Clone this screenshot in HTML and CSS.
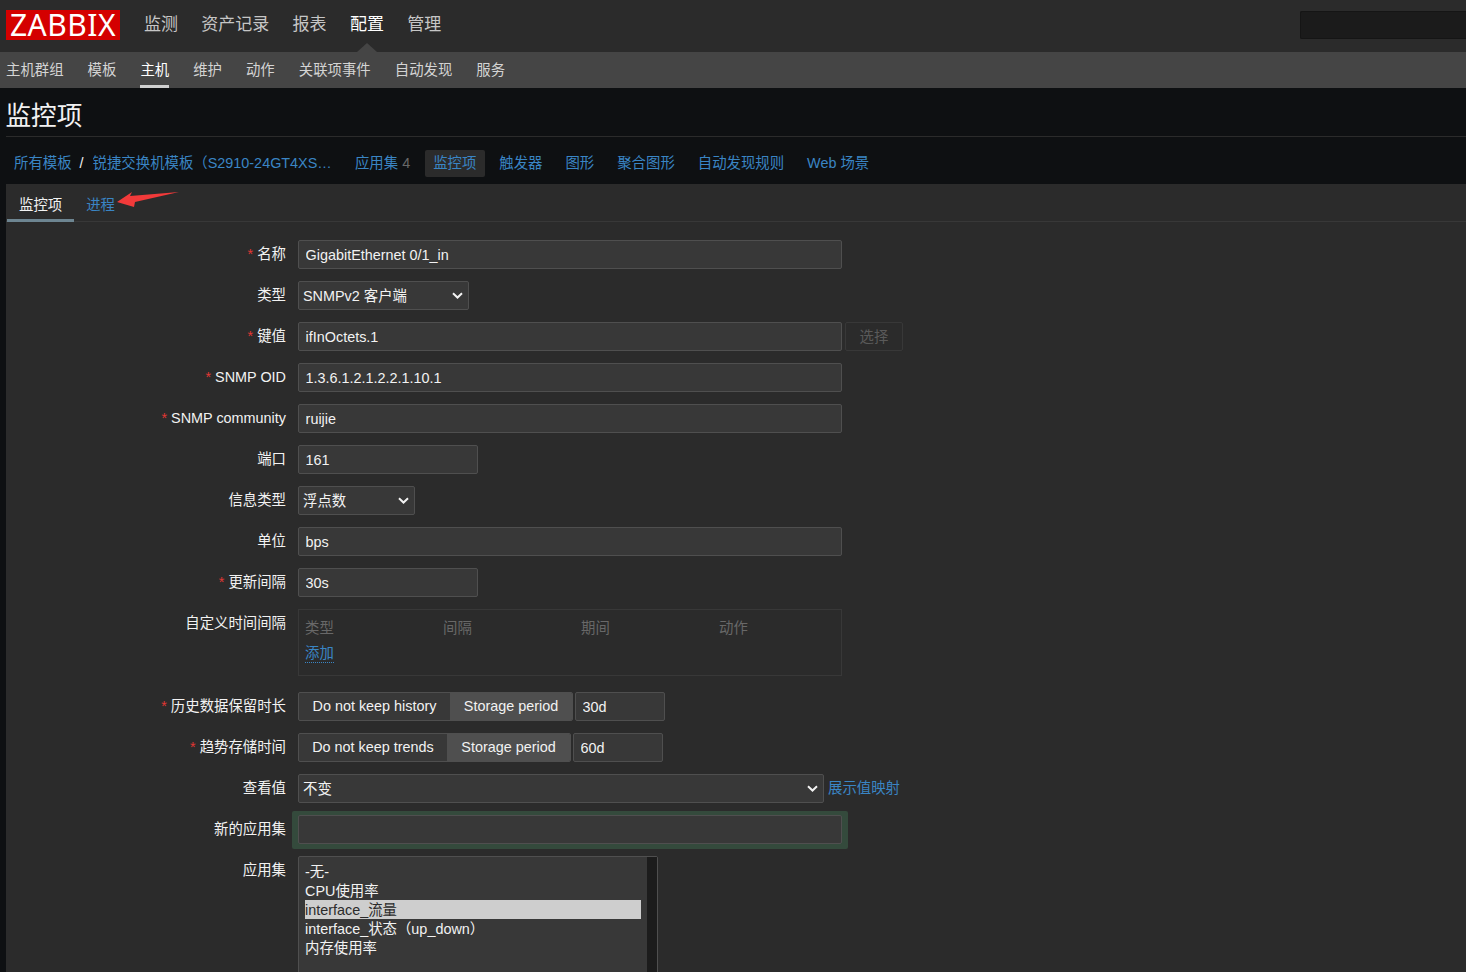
FILE: index.html
```html
<!DOCTYPE html>
<html lang="zh">
<head>
<meta charset="utf-8">
<title>监控项</title>
<link rel="stylesheet" href="styles.css">
</head>
<body>
<header class="topbar">
  <div class="logo">ZABBIX</div>
  <nav class="mainnav">
    <a>监测</a><a>资产记录</a><a>报表</a><a class="on">配置</a><a>管理</a>
  </nav>
  <div class="search"></div>
</header>
<nav class="subnav">
  <a>主机群组</a><a>模板</a><a class="on">主机</a><a>维护</a><a>动作</a><a>关联项事件</a><a>自动发现</a><a>服务</a>
</nav>
<h1 class="title">监控项</h1>
<nav class="crumbs">
  <a class="c-first">所有模板</a><span class="sep">/</span><a class="c-long">锐捷交换机模板（<span class="lat">S2910-24GT4XS-E</span>）</a>
  <div class="c-items">
    <a>应用集 <span class="count">4</span></a>
    <a class="on">监控项</a>
    <a>触发器</a>
    <a>图形</a>
    <a>聚合图形</a>
    <a>自动发现规则</a>
    <a>Web 场景</a>
  </div>
</nav>
<main class="panel">
  <div class="tabs">
    <a class="tab on">监控项</a><a class="tab">进程</a>
    <svg class="arrow" width="64" height="20" viewBox="0 0 64 20"><path d="M0 11 L15 1 L13 5 L62 1 L18 11 L17 16 Z" fill="#f23a3a"/></svg>
  </div>
  <form class="form">
    <div class="row"><label><i>*</i> 名称</label><div><input class="w-full" value="GigabitEthernet 0/1_in"></div></div>
    <div class="row"><label>类型</label><div><select class="w-171"><option>SNMPv2 客户端</option></select></div></div>
    <div class="row"><label><i>*</i> 键值</label><div class="inline"><input class="w-full" value="ifInOctets.1"><button type="button" class="btn" disabled>选择</button></div></div>
    <div class="row"><label><i>*</i> SNMP OID</label><div><input class="w-full" value="1.3.6.1.2.1.2.2.1.10.1"></div></div>
    <div class="row"><label><i>*</i> SNMP community</label><div><input class="w-full" value="ruijie"></div></div>
    <div class="row"><label>端口</label><div><input class="w-180" value="161"></div></div>
    <div class="row"><label>信息类型</label><div><select class="w-117"><option>浮点数</option></select></div></div>
    <div class="row"><label>单位</label><div><input class="w-full" value="bps"></div></div>
    <div class="row"><label><i>*</i> 更新间隔</label><div><input class="w-180" value="30s"></div></div>
    <div class="row row-table"><label>自定义时间间隔</label>
      <div class="intervals">
        <div class="int-head"><span>类型</span><span>间隔</span><span>期间</span><span>动作</span></div>
        <a class="add">添加</a>
      </div>
    </div>
    <div class="row"><label><i>*</i> 历史数据保留时长</label>
      <div class="inline gap2"><div class="toggle"><span class="seg s1">Do not keep history</span><span class="seg on s2">Storage period</span></div><input class="w-90" value="30d"></div>
    </div>
    <div class="row"><label><i>*</i> 趋势存储时间</label>
      <div class="inline gap2"><div class="toggle"><span class="seg s3">Do not keep trends</span><span class="seg on s4">Storage period</span></div><input class="w-90" value="60d"></div>
    </div>
    <div class="row"><label>查看值</label><div class="inline gap4"><select class="w-526"><option>不变</option></select><a class="maplink">展示值映射</a></div></div>
    <div class="row"><label>新的应用集</label><div class="hl"><input class="w-full"></div></div>
    <div class="row"><label>应用集</label>
      <div class="listbox">
        <ul>
          <li>-无-</li>
          <li>CPU使用率</li>
          <li class="sel">interface_流量</li>
          <li>interface_状态（up_down）</li>
          <li>内存使用率</li>
        </ul>
        <div class="scroll"></div>
      </div>
    </div>
  </form>
</main>
</body>
</html>
```
FILE: styles.css
```css
* { box-sizing: border-box; }
html, body { margin: 0; height: 972px; overflow: hidden; }
body {
  background: #0e1012;
  color: #f2f2f2;
  font-family: "Liberation Sans", "Noto Sans CJK SC", sans-serif;
  font-size: 14.4px;
  text-spacing-trim: space-all;
}
a { text-decoration: none; cursor: pointer; }

.topbar {
  height: 52px;
  background: #2b2b2b;
  display: flex;
  align-items: flex-start;
  padding-left: 6px;
}
.logo {
  width: 114px;
  height: 30px;
  margin-top: 10px;
  background: #d40000;
  color: #fff;
  font-family: "Noto Sans", sans-serif;
  font-size: 30px;
  line-height: 30px;
  text-align: center;
  letter-spacing: 0.5px;
}
.mainnav { display: flex; gap: 23.3px; margin-left: 24px; margin-top: 13.5px; font-size: 17px; line-height: 22px; }
.mainnav a { color: #c6c6c6; position: relative; }
.mainnav a.on { color: #fff; }
.mainnav a.on::after {
  content: "";
  position: absolute;
  left: 7px;
  top: 29px;
  border: 10px solid transparent;
  border-top: 0;
  border-bottom: 9px solid #454545;
}
.search {
  margin-left: auto;
  margin-top: 11px;
  width: 166px;
  height: 28px;
  background: #1b1b1b;
  border: 1px solid #151515;
  border-right: 0;
  border-radius: 2px 0 0 2px;
}

.subnav {
  height: 36px;
  background: #454545;
  display: flex;
  gap: 24px;
  padding-left: 6px;
}
.subnav a { color: #d4d4d4; line-height: 36px; height: 36px; }
.subnav a.on { color: #fff; border-bottom: 3px solid #d0d0d0; }

.title {
  height: 49px;
  margin: 0 0 0 5.5px;
  padding-top: 9px;
  font-size: 25.6px;
  line-height: 38px;
  font-weight: 400;
  color: #f2f2f2;
  border-bottom: 1px solid #2b2b2b;
}

.crumbs {
  height: 47px;
  display: flex;
  align-items: center;
  padding-left: 14px;
  padding-top: 6px;
  line-height: 27px;
  color: #3a85c4;
}
.crumbs a { color: #3a85c4; }
.sep { color: #f2f2f2; margin: 0 9px 0 8px; }
.c-long { display: block; height: 27px; width: 240px; overflow: hidden; white-space: nowrap; text-overflow: ellipsis; }
.c-items { display: flex; gap: 6.2px; margin-left: 14px; }
.c-items a { padding: 0 8.4px; height: 27px; line-height: 27px; border-radius: 2px; }
.c-items a.on { background: #2b2b2b; }
.count { color: #686868; }

.panel {
  margin-left: 6px;
  background: #2b2b2b;
  height: 788px;
}
.tabs {
  height: 38px;
  display: flex;
  border-bottom: 1px solid #383838;
  position: relative;
  padding-left: 1px;
}
.tab { padding: 0 12px; line-height: 42px; height: 38px; color: #3a85c4; }
.tab.on { color: #f2f2f2; border-bottom: 3px solid #6d8591; }
.arrow { position: absolute; left: 111px; top: 7px; }

.form { padding-top: 18px; }
.row {
  display: grid;
  grid-template-columns: 280px 1fr;
  column-gap: 12px;
  margin-bottom: 12px;
}
.row-table { margin-bottom: 16px; }
.row label {
  text-align: right;
  line-height: 18px;
  padding-top: 5px;
  color: #f2f2f2;
}
.row label i { font-style: normal; color: #e33734; }
.inline { display: flex; align-items: flex-start; }
.gap2 { gap: 2px; }
.gap4 { gap: 4px; }

input, select {
  display: block;
  height: 29px;
  background-color: #383838;
  border: 1px solid #4f4f4f;
  border-radius: 2px;
  color: #f2f2f2;
  font-family: inherit;
  font-size: 14.4px;
  padding: 0 6.6px;
  margin: 0;
  outline: 0;
}
select {
  appearance: none;
  padding: 0 0 0 4px;
  background-image: url("data:image/svg+xml,%3Csvg xmlns='http://www.w3.org/2000/svg' width='11' height='7' viewBox='0 0 11 7'%3E%3Cpath d='M1 1.2 L5.5 5.5 L10 1.2' fill='none' stroke='%23f2f2f2' stroke-width='2'/%3E%3C/svg%3E");
  background-repeat: no-repeat;
  background-position: right 5px center;
}
.w-full { width: 544px; }
.w-180 { width: 180px; }
.w-90 { width: 90px; }
.w-171 { width: 171px; }
.w-117 { width: 117px; }
.w-526 { width: 526px; }

.btn {
  width: 58px;
  height: 29px;
  margin-left: 3px;
  background: #2b2b2b;
  border: 1px solid #383838;
  border-radius: 2px;
  color: #5a5a5a;
  font-family: inherit;
  font-size: 14.4px;
  padding: 0 0 2px;
}

.intervals {
  width: 544px;
  height: 67px;
  border: 1px solid #383838;
  padding: 9px 6px 0;
}
.int-head { display: grid; grid-template-columns: 138px 138px 138px 1fr; color: #686868; line-height: 18px; }
.add {
  display: inline-block;
  margin-top: 7px;
  color: #3a85c4;
  line-height: 18px;
  border-bottom: 1px dotted #3a85c4;
}

.toggle {
  display: flex;
  height: 29px;
  border: 1px solid #4f4f4f;
  border-radius: 2px;
  background: #383838;
  overflow: hidden;
}
.seg { line-height: 26px; text-align: center; color: #f2f2f2; }
.seg.on { background: #4f4f4f; }
.s1 { width: 151px; }
.s2 { width: 122px; }
.s3 { width: 148px; }
.s4 { width: 123px; }

.maplink { color: #3a85c4; line-height: 29px; }

.hl {
  width: 556px;
  margin: -4px 0 -5px -6px;
  padding: 4px 6px 5px;
  background: #344a3c;
  border-radius: 2px;
}

.listbox {
  width: 360px;
  height: 200px;
  background: #383838;
  border: 1px solid #4f4f4f;
  border-radius: 2px;
  display: flex;
  justify-content: space-between;
}
.listbox ul {
  list-style: none;
  margin: 0;
  padding: 5px 0 0 6px;
  width: 342px;
}
.listbox li { height: 19px; line-height: 21px; white-space: nowrap; }
.listbox li.sel { background: #cecece; color: #2b2b2b; }
.scroll { width: 10px; background: #1c1c1c; }
```
